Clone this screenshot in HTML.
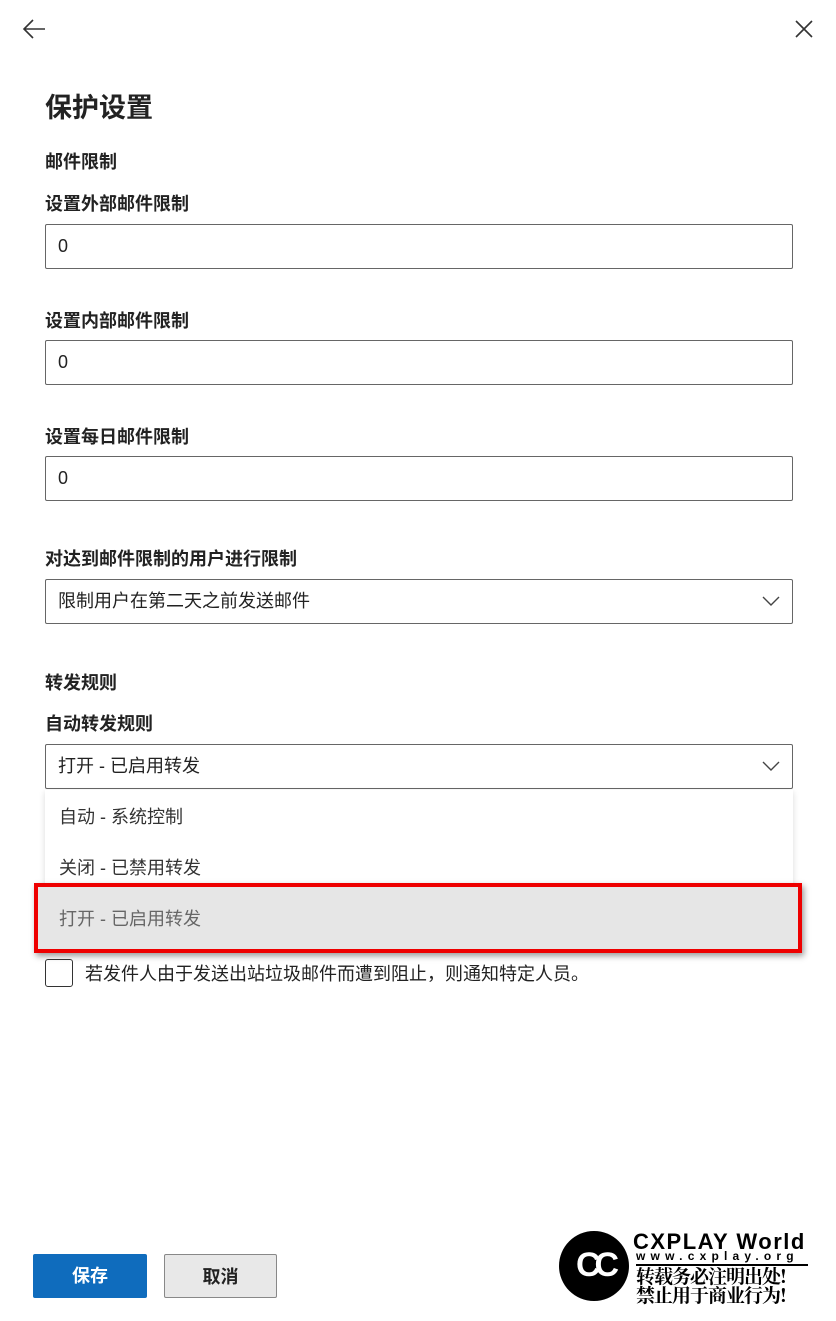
<!DOCTYPE html>
<html><head><meta charset="utf-8"><style>
body{margin:0;width:836px;height:1321px;background:#fff;font-family:"Liberation Sans","Noto Sans CJK SC",sans-serif;color:#222;position:relative;overflow:hidden}
.a{position:absolute}
.lbl{position:absolute;left:45px;font-size:18px;font-weight:bold;color:#222}
.inp{position:absolute;left:45px;width:748px;height:45px;border:1px solid #666;border-radius:2px;box-sizing:border-box;font-size:18px;padding-left:12px;line-height:43px}
.chev{position:absolute;right:12px;top:15px}
.opt{position:absolute;left:59px;font-size:18px;color:#333}
.btn{position:absolute;top:1254px;height:44px;border-radius:2px;box-sizing:border-box;font-size:18px;font-weight:bold;text-align:center;line-height:44px}
</style></head><body>
<svg class="a" style="left:22px;top:18px" width="24" height="22" viewBox="0 0 24 22"><path d="M23 11H2M11 2L2 11l9 9" stroke="#333" stroke-width="1.6" fill="none"/></svg>
<svg class="a" style="left:795px;top:20px" width="18" height="18"><path d="M1 1l16 16M17 1L1 17" stroke="#333" stroke-width="1.6"/></svg>
<div class="a" style="left:45px;top:86px;font-size:27px;font-weight:bold">保护设置</div>
<div class="lbl" style="top:148px">邮件限制</div>
<div class="lbl" style="top:190px">设置外部邮件限制</div>
<div class="inp" style="top:224px">0</div>
<div class="lbl" style="top:307px">设置内部邮件限制</div>
<div class="inp" style="top:340px">0</div>
<div class="lbl" style="top:423px">设置每日邮件限制</div>
<div class="inp" style="top:456px">0</div>
<div class="lbl" style="top:545px">对达到邮件限制的用户进行限制</div>
<div class="inp" style="top:579px">限制用户在第二天之前发送邮件<svg class="chev" width="18" height="12"><path d="M1 2l8 8 8-8" stroke="#444" stroke-width="1.4" fill="none"/></svg></div>
<div class="lbl" style="top:669px">转发规则</div>
<div class="lbl" style="top:710px">自动转发规则</div>
<div class="inp" style="top:744px">打开 - 已启用转发<svg class="chev" width="18" height="12"><path d="M1 2l8 8 8-8" stroke="#444" stroke-width="1.4" fill="none"/></svg></div>
<div class="a" style="left:45px;top:790px;width:748px;height:152px;background:#fff;box-shadow:0 2px 6px rgba(0,0,0,.15)"></div>
<div class="opt" style="top:803px">自动 - 系统控制</div>
<div class="opt" style="top:854px">关闭 - 已禁用转发</div>
<div class="a" style="left:34px;top:883px;width:768px;height:70px;border:4px solid #e00;box-sizing:border-box;background:#e6e6e6;box-shadow:2px 3px 6px rgba(0,0,0,.4)"></div>
<div class="opt" style="top:905px;color:#666">打开 - 已启用转发</div>
<div class="a" style="left:45px;top:959px;width:26px;height:26px;border:1px solid #333;border-radius:3px"></div>
<div class="a" style="left:85px;top:960px;font-size:18px;color:#222">若发件人由于发送出站垃圾邮件而遭到阻止，则通知特定人员。</div>
<div class="btn" style="left:33px;width:114px;background:#0f6cbd;color:#fff">保存</div>
<div class="btn" style="left:164px;width:113px;background:#e8e8e8;border:1px solid #888;color:#222">取消</div>
<div class="a" style="left:559px;top:1231px;width:70px;height:70px;border-radius:50%;background:#000"></div>
<div class="a" style="left:576px;top:1246px;color:#fff;font-size:34px;font-weight:bold;letter-spacing:-6px">CC</div>
<div class="a" style="left:633px;top:1229px;font-size:22px;font-weight:bold;color:#000;letter-spacing:1.5px">CXPLAY World</div>
<div class="a" style="left:636px;top:1249px;font-size:12px;font-weight:bold;letter-spacing:5.2px;color:#000">www.cxplay.org</div>
<div class="a" style="left:636px;top:1264px;width:172px;height:2px;background:#000"></div>
<div class="a" style="left:636px;top:1266px;font-size:19px;font-weight:bold;line-height:19px;color:#000;font-family:'Noto Serif CJK SC',serif;letter-spacing:-1px">转载务必注明出处!<br>禁止用于商业行为!</div>
</body></html>
